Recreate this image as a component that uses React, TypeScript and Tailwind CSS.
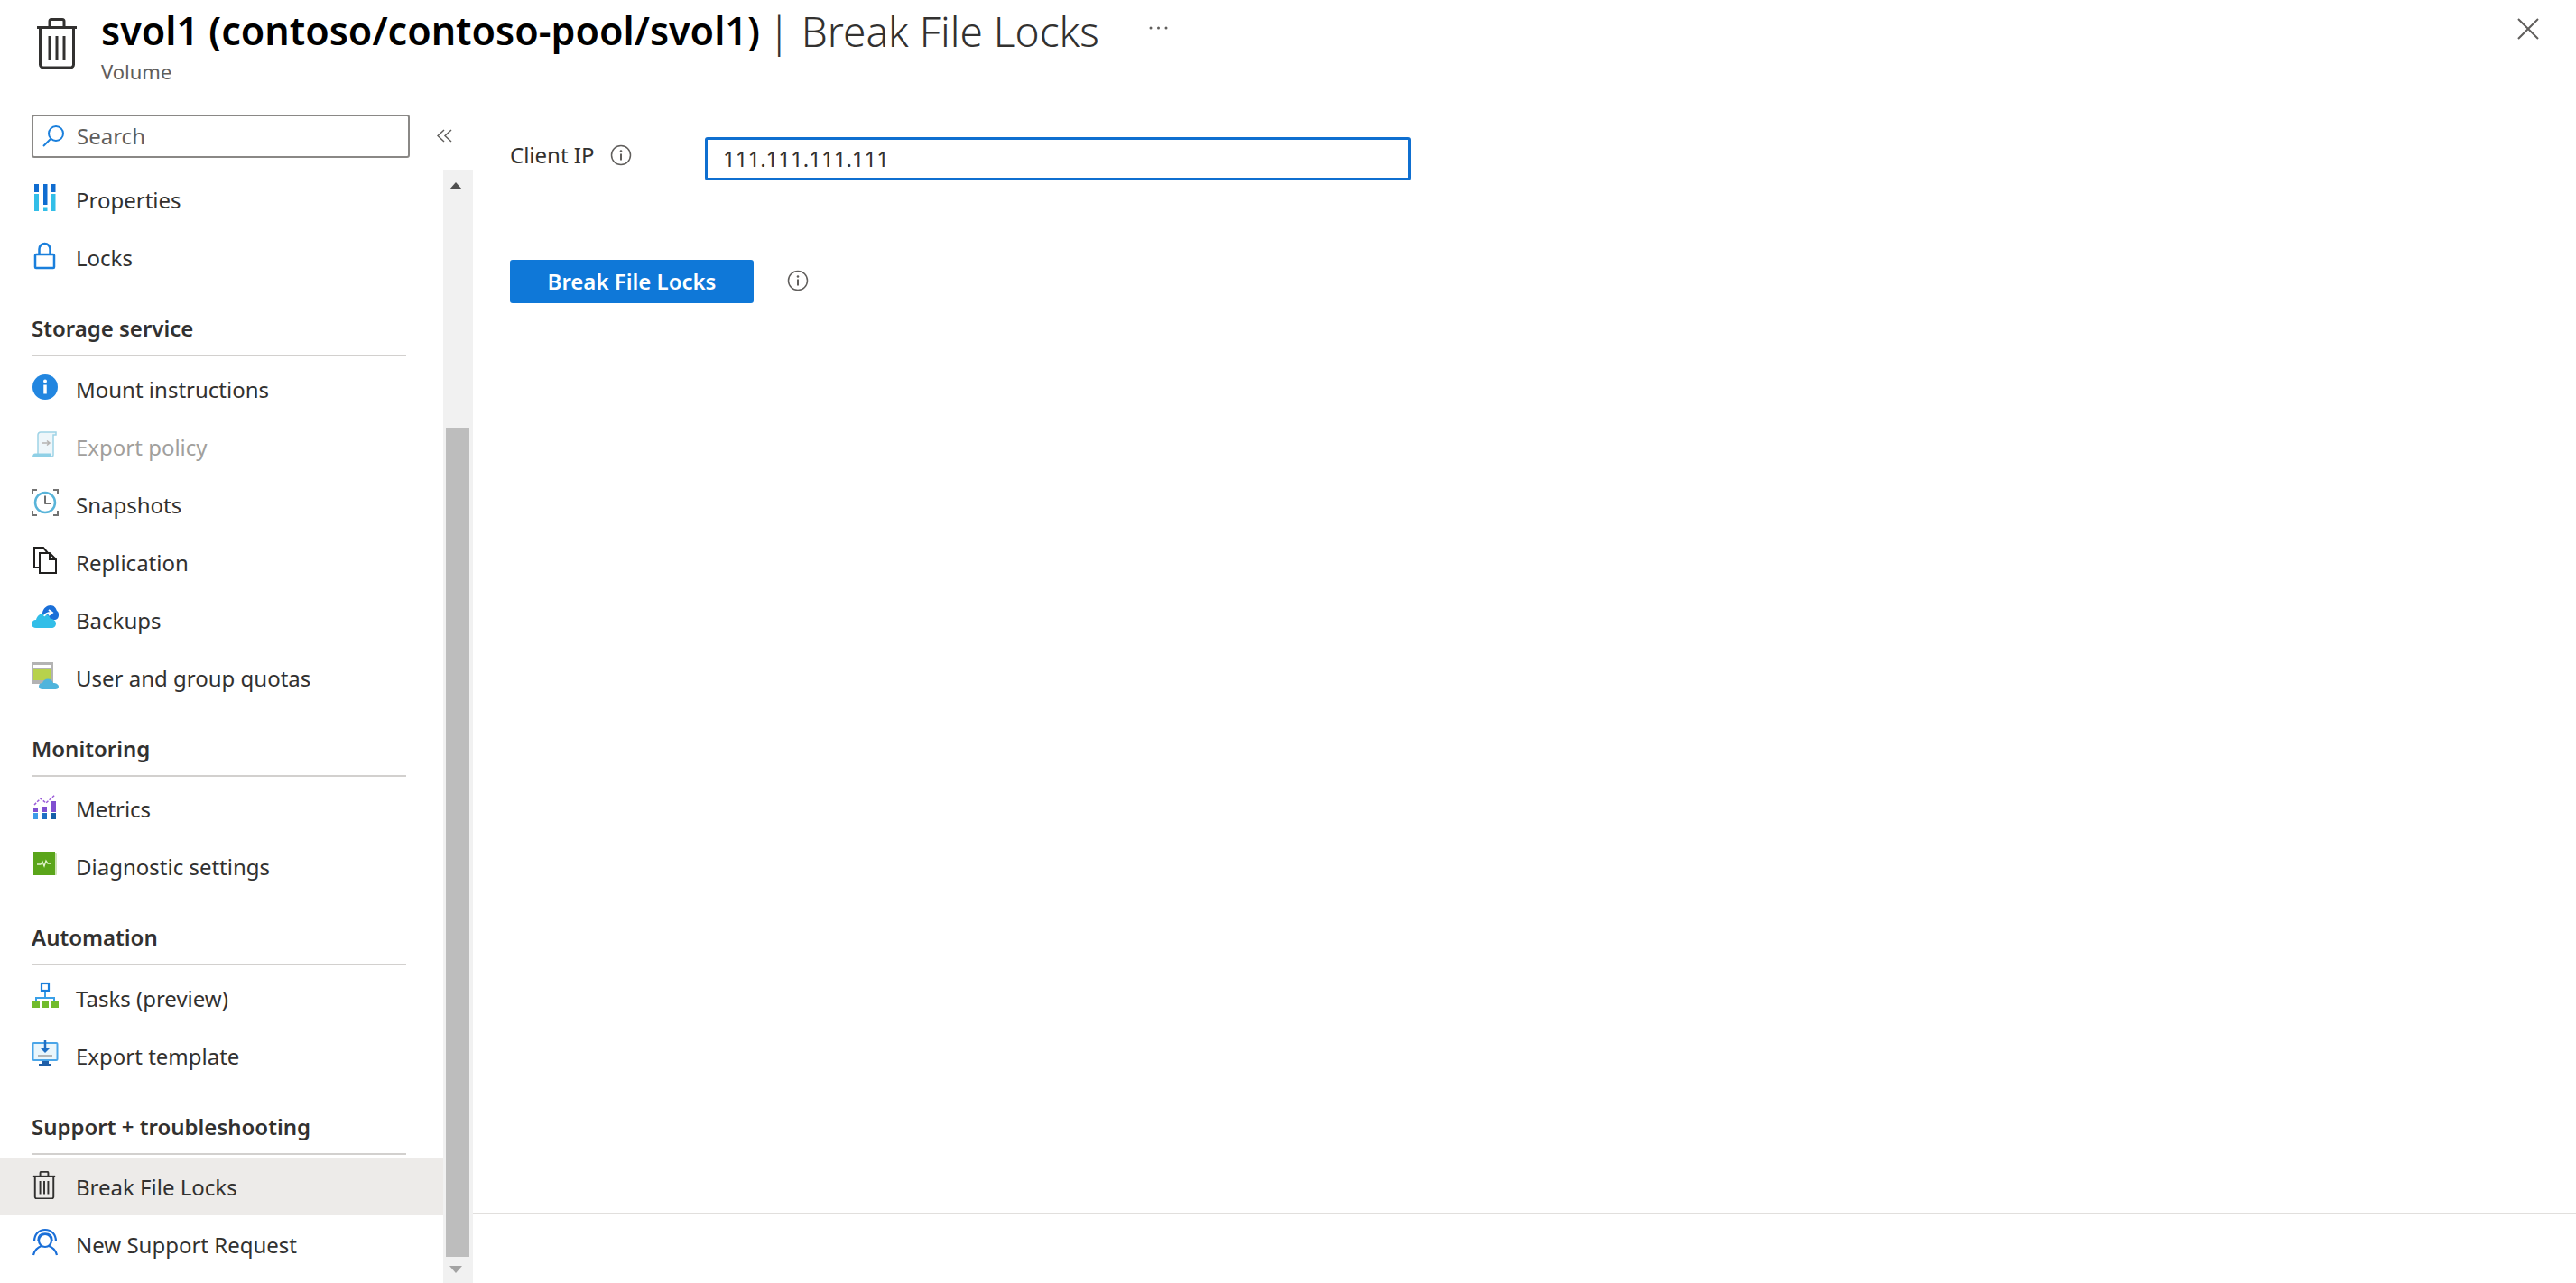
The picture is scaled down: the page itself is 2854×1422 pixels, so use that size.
import type { ReactNode } from 'react';

const Icon = ({ children, className = 'w-[30px] h-[30px]' }: { children: ReactNode; className?: string }) => (
  <svg viewBox="0 0 30 30" fill="none" className={`${className} shrink-0 overflow-visible`}>
    {children}
  </svg>
);

const Trash = ({ className, stroke = 3 }: { className: string; stroke?: number }) => (
  <svg viewBox="0 0 46 56" fill="none" stroke="#323130" strokeWidth={stroke} className={className}>
    <path d="M1 10.5h44" />
    <path d="M15 10V3.5a2 2 0 0 1 2-2h12a2 2 0 0 1 2 2V10" />
    <path d="M4.5 10.5v41a3.5 3.5 0 0 0 3.5 3.5h30a3.5 3.5 0 0 0 3.5-3.5v-41" />
    <path d="M15 20v26M23 20v26M31 20v26" />
  </svg>
);

const InfoOutline = () => (
  <svg viewBox="0 0 24 24" fill="none" className="w-6 h-6 shrink-0">
    <circle cx="12" cy="12" r="10.5" stroke="#605e5c" strokeWidth="1.5" />
    <path d="M12 10.5v7" stroke="#605e5c" strokeWidth="2" />
    <circle cx="12" cy="7.5" r="1.3" fill="#605e5c" />
  </svg>
);

const icons: Record<string, ReactNode> = {
  properties: (
    <Icon>
      <path d="M3 0h5v9H3zM13 0h4.500v23H13zM22 0h4.500v9H22z" fill="#0f6cd0" />
      <path d="M3 11h5v19H3zM13 25.500h4.500V30H13zM22 11h4.500v19H22z" fill="#32bee8" />
    </Icon>
  ),
  lock: (
    <Icon>
      <rect x="4" y="14" width="21" height="15" rx="1" stroke="#1a7fdc" strokeWidth="2.5" />
      <path d="M8.500 14V8a6 6 0 0 1 12 0v6" stroke="#1a7fdc" strokeWidth="2.500" />
    </Icon>
  ),
  info: (
    <Icon>
      <circle cx="15" cy="15" r="14" fill="#2286e0" />
      <circle cx="15" cy="8.500" r="2" fill="#fff" />
      <path d="M15 12.500v10" stroke="#fff" strokeWidth="3.500" />
    </Icon>
  ),
  policy: (
    <Icon>
      <path d="M7 24V4a3 3 0 0 1 3-3h17v3h-3v22a2 2 0 0 1-2 2H7z" fill="#eef6fa" stroke="#9fd3e6" strokeWidth="1.500" />
      <path d="M1 29c0-3 1-4.500 3-4.500h18V29z" fill="#8fd0e6" />
      <path d="M11 13h9m-3-2.500 3 2.500-3 2.500" stroke="#b5b3b1" strokeWidth="1.500" />
    </Icon>
  ),
  snapshot: (
    <Icon>
      <path d="M1 6V1h5M24 1h5v5M1 24v5h5M24 29h5v-5" stroke="#737373" strokeWidth="2" />
      <circle cx="15" cy="15" r="11" fill="#fff" stroke="#59b4d9" strokeWidth="2.500" />
      <path d="M15 7.500V16h6" stroke="#404040" strokeWidth="1.500" />
    </Icon>
  ),
  replication: (
    <Icon>
      <path d="M9 23H3V1h10l5 6" stroke="#201f1e" strokeWidth="2" />
      <path d="M9 7h11l7 7v15H9z" fill="#fff" stroke="#201f1e" strokeWidth="2" />
      <path d="M20 7v7h7" stroke="#201f1e" strokeWidth="2" />
    </Icon>
  ),
  backups: (
    <Icon>
      <path d="M12 9c1-5 5-8 9-8 4 0 6 3 7 6 2 1 2 3 2 5 0 3-2 5-5 5H12z" fill="#1a6fd8" />
      <path d="M5 26c-3 0-5-2-5-4 0-3 2-5 5-5 1-4 4-7 8-7 4 0 7 3 8 6 3 0 6 2 6 5 0 3-2 5-5 5z" fill="#32bee8" />
      <path d="M14 13c1-3 4-4 8-4m-3-3 4 3-4 3" stroke="#fff" strokeWidth="1.800" />
    </Icon>
  ),
  quotas: (
    <Icon>
      <path d="M0 0h24v24H0z" fill="#b3b3b3" />
      <path d="M2 3h20v3H2z" fill="#fff" />
      <path d="M2 8h20v12H2z" fill="#b7d24c" />
      <path d="M12 30c-3 0-4-2-4-3.500C8 24 10 23 12 23c1-3 3-4.500 6-4.500 3 0 5 2 6 4.500 3 0 6 1.500 6 4 0 2-1.500 3-3.500 3z" fill="#4fb4dc" />
    </Icon>
  ),
  metrics: (
    <Icon>
      <path d="M3 13 10 6l6 5 10-9" stroke="#9a5ad8" strokeWidth="1.500" strokeDasharray="3 1.500" />
      <path d="M2 17h5v4H2zM12 15h5v6h-5zM22 9h5v12h-5z" fill="#804fd0" />
      <path d="M2 22h5v7H2z" fill="#3c9be8" />
      <path d="M12 22h5v7h-5z" fill="#1f6fc4" />
      <path d="M22 22h5v7h-5z" fill="#155fa8" />
    </Icon>
  ),
  diagnostic: (
    <Icon>
      <rect x="3" y="2" width="25" height="25" rx="1" fill="#cfe3b8" />
      <rect x="2" y="1" width="24" height="26" fill="#5aa51a" />
      <path d="M6 15h4l2-3 2 5 2-6 2 3h4" stroke="#e4f4d0" strokeWidth="1.300" />
    </Icon>
  ),
  tasks: (
    <Icon>
      <rect x="11" y="1" width="8" height="8" fill="#fff" stroke="#1a7fdc" strokeWidth="2.200" />
      <path d="M15 10v7M5 22v-5h20v5" stroke="#3aa0e8" strokeWidth="2" />
      <path d="M0 21h9v7H0zM11 21h8v7h-8zM21 21h9v7h-9z" fill="#71bb2c" />
    </Icon>
  ),
  template: (
    <Icon>
      <rect x="1.500" y="3" width="27" height="19" rx="1" fill="#eaf6fc" stroke="#4aa5e8" strokeWidth="2" />
      <path d="M15 0v10" stroke="#1f6fc4" strokeWidth="2.500" />
      <path d="M9 8h12l-6 6z" fill="#1f6fc4" />
      <path d="M7 17h16" stroke="#a0a0a0" strokeWidth="1.500" />
      <path d="M11 23h8v3h3v3H8v-3h3z" fill="#1f5fa8" />
    </Icon>
  ),
  support: (
    <Icon>
      <circle cx="15" cy="13" r="7" stroke="#1a6fd8" strokeWidth="2.200" />
      <path d="M3 14C3 6 8 1 15 1s12 5 12 13" stroke="#1a6fd8" strokeWidth="2.200" />
      <path d="M7 13c0-5 3-8 8-8s8 3 8 8" stroke="#1a6fd8" strokeWidth="1.500" />
      <path d="M2 29c1-5 5-9 9-10M28 29c-1-5-5-9-9-10" stroke="#1a6fd8" strokeWidth="2.200" />
    </Icon>
  ),
};

type Item = { label: string; icon: ReactNode; muted?: boolean; active?: boolean };

const sections: { title?: string; items: Item[] }[] = [
  {
    items: [
      { label: 'Properties', icon: icons.properties },
      { label: 'Locks', icon: icons.lock },
    ],
  },
  {
    title: 'Storage service',
    items: [
      { label: 'Mount instructions', icon: icons.info },
      { label: 'Export policy', icon: icons.policy, muted: true },
      { label: 'Snapshots', icon: icons.snapshot },
      { label: 'Replication', icon: icons.replication },
      { label: 'Backups', icon: icons.backups },
      { label: 'User and group quotas', icon: icons.quotas },
    ],
  },
  {
    title: 'Monitoring',
    items: [
      { label: 'Metrics', icon: icons.metrics },
      { label: 'Diagnostic settings', icon: icons.diagnostic },
    ],
  },
  {
    title: 'Automation',
    items: [
      { label: 'Tasks (preview)', icon: icons.tasks },
      { label: 'Export template', icon: icons.template },
    ],
  },
  {
    title: 'Support + troubleshooting',
    items: [
      { label: 'Break File Locks', icon: <Trash className="w-[26px] h-[31px] ml-[1px] shrink-0" stroke={3.5} />, active: true },
      { label: 'New Support Request', icon: icons.support },
    ],
  },
];

function NavRow({ item }: { item: Item }) {
  return (
    <div className={`h-[64px] flex items-center pl-[35px] ${item.active ? 'bg-[#edebe9]' : ''}`}>
      <div className="w-[49px] shrink-0 -mt-1">{item.icon}</div>
      <span className={`text-[24px] pt-[2px] ${item.muted ? 'text-[#a19f9d]' : 'text-[#323130]'}`}>{item.label}</span>
    </div>
  );
}

export default function App() {
  return (
    <div className="w-[2854px] h-[1422px] overflow-hidden bg-white flex flex-col font-['Noto_Sans',sans-serif] text-[#323130]">
      {/* Header */}
      <div className="h-[110px] shrink-0 flex items-start pl-[40px] pr-[41px]">
        <Trash className="w-[46px] h-[56px] mt-[20px] shrink-0" />
        <div className="ml-[26px]">
          <div className="flex items-center h-[76px] -mt-[4px]">
            <h1 className="text-[43px] font-semibold text-black whitespace-nowrap">svol1 (contoso/contoso-pool/svol1)</h1>
            <span className="text-[46px] font-light ml-[9px] whitespace-nowrap">| Break File Locks</span>
            <svg viewBox="0 0 21 4" className="w-[21px] h-1 ml-[55px] -mt-[6px]" fill="#605e5c">
              <circle cx="2" cy="2" r="1.500" />
              <circle cx="10.500" cy="2" r="1.500" />
              <circle cx="19" cy="2" r="1.500" />
            </svg>
          </div>
          <div className="text-[22px] leading-[22px] text-[#605e5c] -mt-[4px]">Volume</div>
        </div>
        <svg viewBox="0 0 24 24" className="w-6 h-6 mt-[20px] ml-auto" stroke="#605e5c" strokeWidth="2">
          <path d="M1 1l22 22M23 1 1 23" />
        </svg>
      </div>

      <div className="flex-1 flex min-h-0">
        {/* Sidebar */}
        <div className="w-[524px] shrink-0 flex flex-col">
          <div className="h-[78px] shrink-0 flex items-start pl-[35px] pt-[17px]">
            <div className="w-[419px] h-[48px] border-2 border-[#8a8886] rounded-[3px] flex items-center pl-[10px]">
              <svg viewBox="0 0 24 24" fill="none" className="w-6 h-6" stroke="#1a7fdc" strokeWidth="2">
                <circle cx="15" cy="9" r="8" />
                <path d="M9 15 1 23" />
              </svg>
              <span className="ml-[14px] text-[24px] text-[#605e5c]">Search</span>
            </div>
            <svg viewBox="0 0 17 15" fill="none" className="w-[17px] h-[15px] ml-[30px] mt-[16px]" stroke="#605e5c" strokeWidth="1.500">
              <path d="M8 1 1 7.500 8 14M16 1 9 7.500 16 14" />
            </svg>
          </div>
          <div className="flex-1 min-h-0 flex">
            <nav className="w-[491px] shrink-0 overflow-hidden pt-[1px]">
              {sections.map((section) => (
                <div key={section.title ?? 'top'}>
                  {section.title && (
                    <div className="h-[81.5px] pl-[35px] pr-[41px]">
                      <div className="h-[78px] flex items-end pb-[11px] border-b-2 border-[#d2d0ce] text-[24px] font-semibold text-[#323130]">
                        {section.title}
                      </div>
                    </div>
                  )}
                  {section.items.map((item) => (
                    <NavRow key={item.label} item={item} />
                  ))}
                </div>
              ))}
            </nav>
            {/* Scrollbar */}
            <div className="w-[33px] shrink-0 bg-[#f1f1f1] flex flex-col items-center">
              <div className="h-[286px] w-full flex justify-center pt-[14px] pr-[6px]">
                <div className="w-0 h-0 border-x-[7px] border-x-transparent border-b-[8px] border-b-[#505050]" />
              </div>
              <div className="w-[26px] h-[919px] bg-[#bdbdbd] -ml-[1px]" />
              <div className="w-full flex justify-center pt-[10px] pr-[6px]">
                <div className="w-0 h-0 border-x-[7px] border-x-transparent border-t-[8px] border-t-[#a3a3a3]" />
              </div>
            </div>
          </div>
        </div>

        {/* Main */}
        <div className="flex-1 flex flex-col min-w-0">
          <div className="flex-1 pt-[42px] pl-[41px]">
            <div className="flex items-start">
              <div className="w-[216px] flex items-center h-[40px] gap-[18px]">
                <span className="text-[24px]">Client IP</span>
                <InfoOutline />
              </div>
              <div className="w-[782px] h-[48px] border-[3px] border-[#0f6fd0] rounded-[3px] flex items-center pl-[17px] text-[24px]">
                111.111.111.111
              </div>
            </div>
            <div className="flex items-center mt-[88px]">
              <button className="w-[270px] h-[48px] bg-[#0f78d8] rounded-[3px] text-white text-[24px] font-semibold">
                Break File Locks
              </button>
              <div className="ml-[37px] -mt-[2px]">
                <InfoOutline />
              </div>
            </div>
          </div>
          <div className="h-[78px] shrink-0 border-t-2 border-[#e1dfdd]" />
        </div>
      </div>
    </div>
  );
}
